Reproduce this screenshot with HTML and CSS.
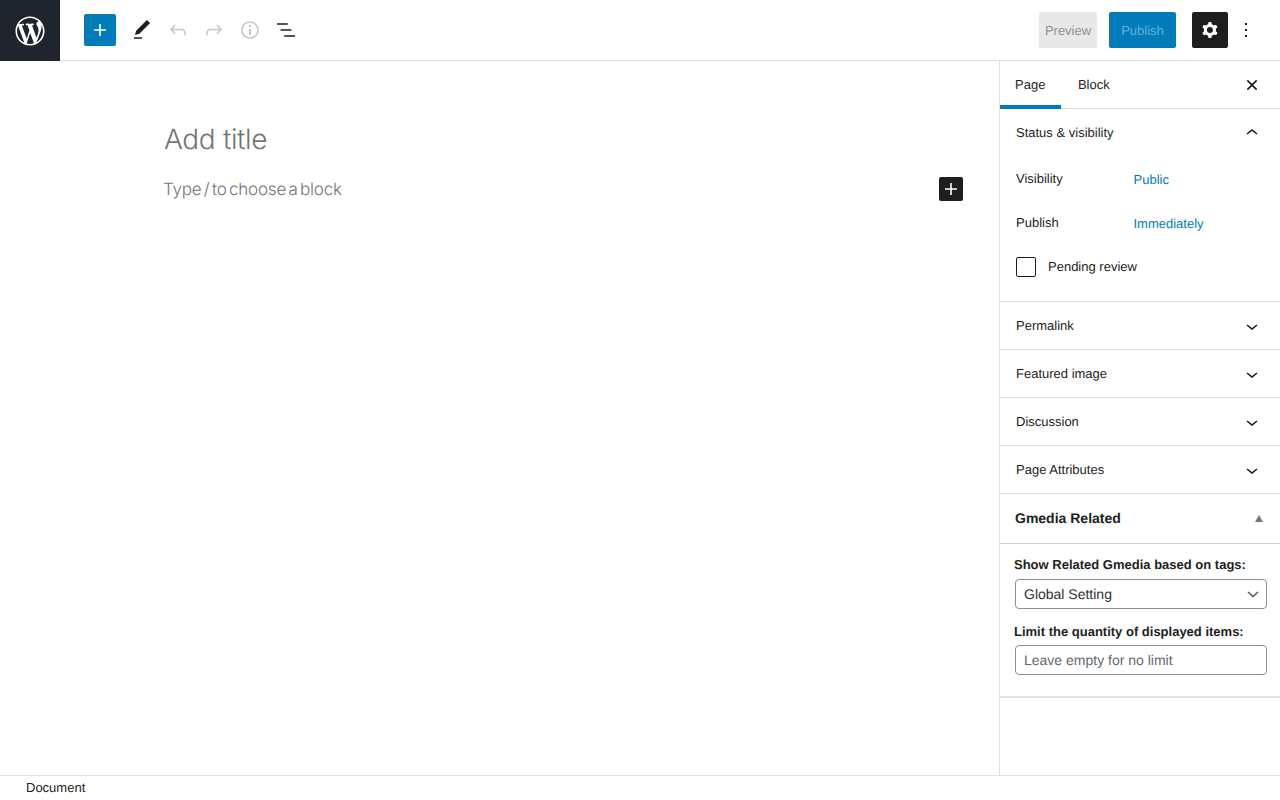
FILE: index.html
```html
<!DOCTYPE html>
<html lang="en">
<head>
<meta charset="utf-8">
<title>Add New Page</title>
<link rel="stylesheet" href="styles.css">
</head>
<body>
<div class="app">
  <header class="topbar">
    <a class="wp-logo"><svg width="32" height="32" viewBox="-1 -1 22 22"><path fill="#fff" d="M20 10c0-5.51-4.49-10-10-10C4.48 0 0 4.49 0 10c0 5.52 4.48 10 10 10 5.51 0 10-4.48 10-10zM7.78 15.37L4.37 6.22c.55-.02 1.17-.08 1.17-.08.5-.06.44-1.13-.06-1.11 0 0-1.45.11-2.37.11-.18 0-.37 0-.58-.01C4.12 2.69 6.87 1.11 10 1.11c2.33 0 4.45.87 6.05 2.34-.68-.11-1.65.39-1.65 1.58 0 .74.45 1.36.9 2.1.35.61.55 1.36.55 2.46 0 1.49-1.4 5-1.4 5l-3.03-8.37c.54-.02.82-.17.82-.17.5-.05.44-1.25-.06-1.22 0 0-1.44.12-2.38.12-.87 0-2.33-.12-2.33-.12-.5-.03-.56 1.2-.06 1.22l.92.08 1.26 3.41zM17.41 10c.24-.64.74-1.87.43-4.25.7 1.29 1.05 2.71 1.05 4.25 0 3.29-1.73 6.24-4.4 7.78.97-2.59 1.94-5.2 2.92-7.78zM6.1 18.09C3.12 16.65 1.11 13.53 1.11 10c0-1.3.23-2.48.72-3.59C3.25 10.3 4.67 14.2 6.1 18.09zm4.03-6.63l2.58 6.98c-.86.29-1.76.45-2.71.45-.79 0-1.57-.11-2.29-.33.81-2.38 1.62-4.74 2.42-7.1z"/></svg></a>
    <div class="tools">
      <button class="add-btn"><svg width="24" height="24" viewBox="0 0 24 24"><path fill="#fff" d="M18 11.2h-5.2V6h-1.6v5.2H6v1.6h5.2V18h1.6v-5.2H18z"/></svg></button>
      <button class="tool"><svg width="24" height="24" viewBox="0 0 24 24"><path fill="#1e1e1e" d="M20.1 5.1L16.9 2 6.2 12.7l-1.3 4.4 4.5-1.3L20.1 5.1zM4 20.8h8v-1.5H4v1.5z"/></svg></button>
      <button class="tool"><svg width="24" height="24" viewBox="0 0 24 24"><path fill="#c6c6c6" d="M18.3 11.7c-.6-.6-1.4-.9-2.3-.9H6.7l2.9-3.3-1.1-1-4.5 5L8.5 16l1-1-2.7-2.7H16c.5 0 .9.2 1.3.5 1 1 1 3.4 1 4.5v.3h1.5v-.2c0-1.5 0-4.3-1.5-5.7z"/></svg></button>
      <button class="tool"><svg width="24" height="24" viewBox="0 0 24 24"><path fill="#c6c6c6" d="M15.6 6.5l-1.1 1 2.9 3.3H8c-.9 0-1.7.3-2.3.9-1.4 1.5-1.4 4.2-1.4 5.6v.2h1.5v-.3c0-1.1 0-3.5 1-4.5.3-.3.7-.5 1.3-.5h9.2L14.5 15l1.1 1.1 4.6-4.6-4.6-5z"/></svg></button>
      <button class="tool"><svg width="24" height="24" viewBox="0 0 24 24"><path fill="#c6c6c6" d="M12 3.2c-4.8 0-8.8 3.9-8.8 8.8 0 4.8 3.9 8.8 8.8 8.8 4.8 0 8.8-3.9 8.8-8.8 0-4.8-4-8.8-8.8-8.8zm0 16c-4 0-7.2-3.3-7.2-7.2C4.8 8 8 4.8 12 4.8s7.2 3.3 7.2 7.2c0 4-3.2 7.2-7.2 7.2zM11 17h2v-6h-2v6zm0-8h2V7h-2v2z"/></svg></button>
      <button class="tool"><svg width="24" height="24" viewBox="0 0 24 24"><path fill="#1e1e1e" d="M13.8 5.2H3v1.5h10.8V5.2zm-3.6 12v1.5H21v-1.5H10.2zm7.2-6H6.6v1.5h10.8v-1.5z"/></svg></button>
    </div>
    <div class="actions">
      <button class="preview-btn">Preview</button>
      <button class="publish-btn">Publish</button>
      <button class="settings-btn"><svg width="24" height="24" viewBox="0 0 24 24"><path fill="#fff" fill-rule="evenodd" d="M10.289 4.836A1 1 0 0111.275 4h1.306a1 1 0 01.987.836l.244 1.466c.787.26 1.503.679 2.108 1.218l1.393-.522a1 1 0 011.216.437l.653 1.13a1 1 0 01-.23 1.273l-1.148.944a6.025 6.025 0 010 2.435l1.149.946a1 1 0 01.23 1.272l-.653 1.13a1 1 0 01-1.216.437l-1.394-.522c-.605.54-1.32.958-2.108 1.218l-.244 1.466a1 1 0 01-.987.836h-1.306a1 1 0 01-.986-.836l-.244-1.466a5.995 5.995 0 01-2.108-1.218l-1.394.522a1 1 0 01-1.217-.436l-.653-1.131a1 1 0 01.23-1.272l1.149-.946a6.026 6.026 0 010-2.435l-1.148-.944a1 1 0 01-.23-1.272l.653-1.131a1 1 0 011.217-.437l1.393.522a5.994 5.994 0 012.108-1.218l.244-1.466zM14.929 12a3 3 0 11-6 0 3 3 0 016 0z"/></svg></button>
      <button class="more-btn"><svg width="24" height="24" viewBox="0 0 24 24"><path fill="#1e1e1e" d="M13 19h-2v-2h2v2zm0-6h-2v-2h2v2zm0-6h-2V5h2v2z"/></svg></button>
    </div>
  </header>
  <div class="main">
    <main class="editor">
      <h1 class="title">Add title</h1>
      <div class="block-row">
        <p class="block-hint">Type / to choose a block</p>
        <button class="block-add"><svg width="24" height="24" viewBox="0 0 24 24"><path fill="#fff" d="M18 11.2h-5.2V6h-1.6v5.2H6v1.6h5.2V18h1.6v-5.2H18z"/></svg></button>
      </div>
    </main>
    <aside class="sidebar">
      <div class="tabs">
        <span class="tab tab-active">Page</span>
        <span class="tab">Block</span>
        <button class="close-btn"><svg width="24" height="24" viewBox="0 0 24 24"><path fill="#1e1e1e" d="M12 13.06l3.712 3.713 1.061-1.06L13.061 12l3.712-3.712-1.06-1.06L12 10.938 8.288 7.227l-1.061 1.06L10.939 12l-3.712 3.712 1.06 1.061L12 13.061z"/></svg></button>
      </div>
      <section class="panel panel-open">
        <div class="panel-head"><span>Status &amp; visibility</span><svg width="24" height="24" viewBox="0 0 24 24"><path fill="#1e1e1e" d="M6.5 12.4L12 8l5.5 4.4-.9 1.2L12 10l-4.5 3.6-1-1.2z"/></svg></div>
        <div class="row"><span class="row-label">Visibility</span><a class="row-link">Public</a></div>
        <div class="row"><span class="row-label">Publish</span><a class="row-link">Immediately</a></div>
        <label class="check-row"><span class="checkbox"></span><span>Pending review</span></label>
      </section>
      <section class="panel"><div class="panel-head"><span>Permalink</span><svg width="24" height="24" viewBox="0 0 24 24"><path fill="#1e1e1e" d="M17.5 11.6L12 16l-5.5-4.4.9-1.2L12 14l4.5-3.6 1 1.2z"/></svg></div></section>
      <section class="panel"><div class="panel-head"><span>Featured image</span><svg width="24" height="24" viewBox="0 0 24 24"><path fill="#1e1e1e" d="M17.5 11.6L12 16l-5.5-4.4.9-1.2L12 14l4.5-3.6 1 1.2z"/></svg></div></section>
      <section class="panel"><div class="panel-head"><span>Discussion</span><svg width="24" height="24" viewBox="0 0 24 24"><path fill="#1e1e1e" d="M17.5 11.6L12 16l-5.5-4.4.9-1.2L12 14l4.5-3.6 1 1.2z"/></svg></div></section>
      <section class="panel"><div class="panel-head"><span>Page Attributes</span><svg width="24" height="24" viewBox="0 0 24 24"><path fill="#1e1e1e" d="M17.5 11.6L12 16l-5.5-4.4.9-1.2L12 14l4.5-3.6 1 1.2z"/></svg></div></section>
      <section class="meta">
        <div class="meta-head"><span>Gmedia Related</span><span class="meta-arrow"></span></div>
        <div class="meta-body">
          <p class="meta-label">Show Related Gmedia based on tags:</p>
          <div class="select-box"><span>Global Setting</span><svg width="12" height="7" viewBox="0 0 12 7"><path fill="none" stroke="#50575e" stroke-width="1.5" d="M1 1l5 4.5L11 1"/></svg></div>
          <p class="meta-label meta-label-second">Limit the quantity of displayed items:</p>
          <input class="text-input" type="text" placeholder="Leave empty for no limit">
        </div>
      </section>
    </aside>
  </div>
  <footer class="statusbar">Document</footer>
</div>
</body>
</html>
```

FILE: styles.css
```css
* { box-sizing: border-box; }
html, body { margin: 0; height: 100%; }
body { font-family: "Liberation Sans", Arial, sans-serif; font-size: 13px; color: #1e1e1e; background: #fff; overflow: hidden; text-rendering: geometricPrecision; }
button { border: 0; background: none; padding: 0; margin: 0; font: inherit; text-rendering: inherit; display: flex; align-items: center; justify-content: center; }
p, h1 { margin: 0; }
.app { display: flex; flex-direction: column; height: 800px; }
.topbar { height: 61px; flex: none; display: flex; align-items: flex-start; border-bottom: 1px solid #e0e0e0; }
.wp-logo { width: 60px; height: 61px; background: #1f252d; display: flex; align-items: center; justify-content: center; flex: none; margin-bottom: -1px; }
.tools { display: flex; align-items: center; height: 60px; padding-left: 24px; }
.add-btn { width: 32px; height: 32px; background: #007cba; border-radius: 2px; margin-right: 8px; }
.tool { width: 36px; height: 36px; }
.actions { margin-left: auto; display: flex; align-items: center; height: 60px; padding-right: 16px; }
.preview-btn { width: 58px; height: 36px; background: #e8e8e8; color: #8f8f8f; border-radius: 2px; margin-right: 12px; }
.publish-btn { width: 67px; height: 36px; background: #007cba; color: #66b0d6; border-radius: 2px; margin-right: 16px; }
.settings-btn { width: 36px; height: 36px; background: #1e1e1e; border-radius: 2px; }
.more-btn { width: 36px; height: 36px; }
.main { flex: 1; display: flex; min-height: 0; }
.editor { flex: 1; padding: 60px 36px 0 163px; min-width: 0; }
.title { font-family: Inter, sans-serif; font-weight: 300; font-size: 28px; line-height: 36px; color: #757575; padding-left: 1px; height: 36px; letter-spacing: -0.35px; }
.block-row { display: flex; align-items: center; justify-content: space-between; margin-top: 20px; height: 24px; }
.block-hint { font-family: Inter, sans-serif; font-weight: 300; font-size: 17px; letter-spacing: -0.2px; word-spacing: -2.2px; color: #757575; position: relative; top: 1px; }
.block-add { width: 24px; height: 24px; background: #1e1e1e; border-radius: 2px; }
.sidebar { width: 281px; flex: none; border-left: 1px solid #e0e0e0; }
.tabs { display: flex; height: 48px; border-bottom: 1px solid #e0e0e0; }
.tab { height: 48px; padding: 0 16px 1px 15px; display: flex; align-items: center; margin-bottom: -1px; }
.tab-active { box-shadow: inset 0 -4px 0 #007cba; }
.tab + .tab { padding-left: 16.5px; }
.close-btn { margin-left: auto; width: 36px; height: 48px; margin-right: 10px; }
.close-btn svg { transform: scale(1.1); }
.panel { border-bottom: 1px solid #e0e0e0; }
.panel-head { height: 47px; display: flex; align-items: center; justify-content: space-between; padding: 0 16px; }
.panel-open { height: 193px; }
.row { display: flex; height: 44px; padding: 0 16px; align-items: center; }
.row-label { width: 117.5px; }
.row-link { color: #007cba; position: relative; top: 1px; }
.check-row { display: flex; align-items: center; padding: 0 16px; height: 44px; }
.checkbox { width: 20px; height: 20px; border: 1px solid #1e1e1e; border-radius: 2px; margin: 1px 12px 0 0; }
.meta { border-bottom: 2px solid #e0e0e0; height: 204px; }
.meta-head { height: 50px; display: flex; align-items: center; justify-content: space-between; padding: 0 17px 1px 15px; border-bottom: 1px solid #ccd0d4; font-size: 14px; font-weight: 700; }
.meta-arrow { width: 0; height: 0; border-left: 4px solid transparent; border-right: 4px solid transparent; border-bottom: 7px solid #72777c; }
.meta-body { padding: 13px 12px 0 14px; }
.meta-label { font-weight: 700; line-height: 16px; margin-bottom: 6px; }
.meta-label-second { margin-top: 15px; margin-bottom: 5px; }
.select-box, .text-input { width: 252px; height: 30px; margin-left: 1px; border: 1px solid #8c8f94; border-radius: 4px; font-family: "Liberation Sans", Arial, sans-serif; font-size: 14px; color: #2c3338; padding: 0 8px; background: #fff; display: flex; align-items: center; justify-content: space-between; }
.select-box svg { margin-right: -1px; }
.text-input { display: block; outline: 0; text-rendering: geometricPrecision; }
.text-input::placeholder { color: #646970; opacity: 1; }
.statusbar { height: 25px; flex: none; border-top: 1px solid #e0e0e0; padding-left: 26px; line-height: 23px; }
```
